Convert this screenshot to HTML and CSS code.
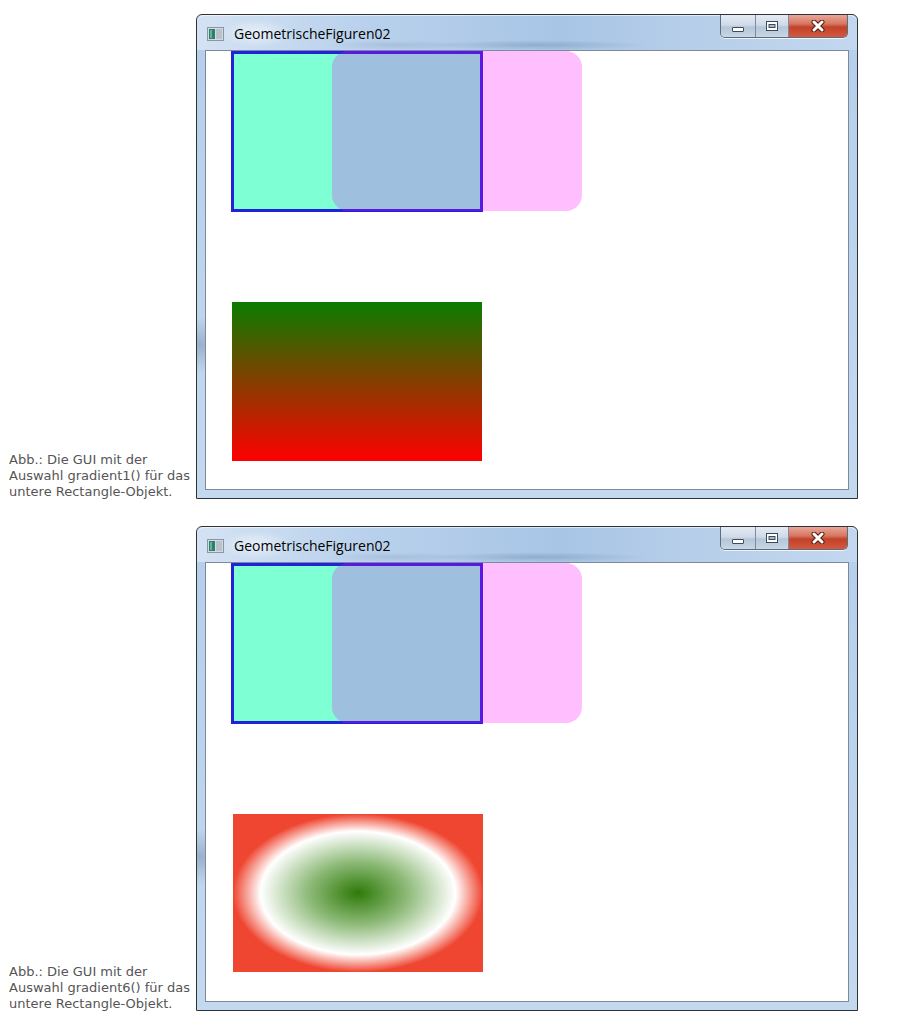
FILE: index.html
```html
<!DOCTYPE html>
<html lang="de">
<head>
<meta charset="utf-8">
<title>GeometrischeFiguren02</title>
<link rel="stylesheet" href="styles.css">
</head>
<body>
<div class="figure">
  <p class="caption">Abb.: Die GUI mit der<br>Auswahl gradient1() für das<br>untere Rectangle-Objekt.</p>
  <div class="window">
    <div class="titlebar">
      <svg class="app-icon" width="17" height="14" viewBox="0 0 17 14"><rect x="0.5" y="0.5" width="16" height="13" fill="#d4dbe2" stroke="#8a96a3"/><rect x="2" y="2" width="6" height="10" fill="#2f7f6c"/><rect x="3" y="3" width="2" height="8" fill="#5fb39a"/><rect x="9" y="2" width="6" height="10" fill="#b8c2cc"/></svg>
      <span class="title">GeometrischeFiguren02</span>
      <div class="controls">
        <div class="btn btn-min"><svg width="14" height="8" viewBox="0 0 14 8"><rect x="1.5" y="3.5" width="11" height="4" rx="0.5" fill="#fff" stroke="#3c4a5c"/></svg></div>
        <div class="btn btn-max"><svg width="14" height="12" viewBox="0 0 14 12"><rect x="1.5" y="1.5" width="11" height="9" fill="#fff" stroke="#3c4a5c"/><rect x="4" y="4.5" width="6" height="3" fill="#a9bacd" stroke="#3c4a5c" stroke-width="1"/></svg></div>
        <div class="btn btn-close"><svg width="16" height="12" viewBox="0 0 16 12"><path d="M4 2 L12 10 M12 2 L4 10" stroke="#5a1a10" stroke-width="5" stroke-linecap="round"/><path d="M4 2 L12 10 M12 2 L4 10" stroke="#fff" stroke-width="3" stroke-linecap="round"/></svg></div>
      </div>
    </div>
    <div class="client">
      <div class="shape aqua"></div>
      <div class="shape pink"></div>
      <div class="shape linear"></div>
    </div>
  </div>
</div>
<div class="figure">
  <p class="caption">Abb.: Die GUI mit der<br>Auswahl gradient6() für das<br>untere Rectangle-Objekt.</p>
  <div class="window">
    <div class="titlebar">
      <svg class="app-icon" width="17" height="14" viewBox="0 0 17 14"><rect x="0.5" y="0.5" width="16" height="13" fill="#d4dbe2" stroke="#8a96a3"/><rect x="2" y="2" width="6" height="10" fill="#2f7f6c"/><rect x="3" y="3" width="2" height="8" fill="#5fb39a"/><rect x="9" y="2" width="6" height="10" fill="#b8c2cc"/></svg>
      <span class="title">GeometrischeFiguren02</span>
      <div class="controls">
        <div class="btn btn-min"><svg width="14" height="8" viewBox="0 0 14 8"><rect x="1.5" y="3.5" width="11" height="4" rx="0.5" fill="#fff" stroke="#3c4a5c"/></svg></div>
        <div class="btn btn-max"><svg width="14" height="12" viewBox="0 0 14 12"><rect x="1.5" y="1.5" width="11" height="9" fill="#fff" stroke="#3c4a5c"/><rect x="4" y="4.5" width="6" height="3" fill="#a9bacd" stroke="#3c4a5c" stroke-width="1"/></svg></div>
        <div class="btn btn-close"><svg width="16" height="12" viewBox="0 0 16 12"><path d="M4 2 L12 10 M12 2 L4 10" stroke="#5a1a10" stroke-width="5" stroke-linecap="round"/><path d="M4 2 L12 10 M12 2 L4 10" stroke="#fff" stroke-width="3" stroke-linecap="round"/></svg></div>
      </div>
    </div>
    <div class="client">
      <div class="shape aqua"></div>
      <div class="shape pink"></div>
      <div class="shape radial"></div>
    </div>
  </div>
</div>
</body>
</html>
```
FILE: styles.css
```css
html, body {
  background: #ffffff;
}
body {
  margin: 8px;
  padding-top: 6px;
  font-family: "DejaVu Sans", Verdana, sans-serif;
}
.figure {
  display: flex;
  align-items: flex-end;
  margin-bottom: 27px;
}
.caption {
  width: 187px;
  margin: 0 0 -1px 0;
  padding: 0 0 0 1px;
  font-size: 13px;
  line-height: 16px;
  color: #555555;
  white-space: nowrap;
}
.window {
  box-sizing: border-box;
  width: 662px;
  height: 485px;
  border: 1px solid #2e3338;
  border-radius: 6px 6px 0 0;
  background:
    radial-gradient(ellipse 60px 40px at 2px 330px, rgba(70, 90, 120, 0.3), rgba(70, 90, 120, 0) 70%),
    linear-gradient(to bottom, #bed5ee 0px, #b7cfea 40px, #c4d9f0 100%);
  display: flex;
  flex-direction: column;
  padding: 0 8px 8px 8px;
  position: relative;
}
.titlebar {
  height: 35px;
  flex: none;
  display: flex;
  align-items: center;
  margin: 0 -8px;
  padding: 0 0 0 10px;
  position: relative;
  border-radius: 6px 6px 0 0;
  background:
    radial-gradient(ellipse 140px 6px at 340px 30px, rgba(60, 80, 110, 0.22), rgba(60, 80, 110, 0) 80%),
    radial-gradient(ellipse 90px 6px at 200px 30px, rgba(60, 80, 110, 0.12), rgba(60, 80, 110, 0) 80%),
    radial-gradient(ellipse 40px 16px at 60px 18px, rgba(255, 255, 255, 0.55), rgba(255, 255, 255, 0) 90%),
    linear-gradient(to right, #d4e3f3 0%, #b9d1ec 25%, #a8c5e6 55%, #b6cee9 75%, #c3d8ef 100%);
  box-shadow: inset 0 1px 0 rgba(255, 255, 255, 0.6);
}
.app-icon {
  flex: none;
  margin-top: 3px;
}
.title {
  margin-left: 10px;
  margin-top: 2px;
  font-family: "Open Sans", "Noto Sans", sans-serif;
  font-size: 14px;
  color: #000000;
}
.controls {
  position: absolute;
  top: 0;
  right: 9px;
  display: flex;
  height: 22px;
  border: 1px solid #5d6c7e;
  border-top: none;
  border-radius: 0 0 5px 5px;
  overflow: hidden;
  box-shadow: 0 1px 0 rgba(255, 255, 255, 0.7);
}
.btn {
  display: flex;
  align-items: center;
  justify-content: center;
}
.btn-min, .btn-max {
  background: linear-gradient(to bottom, #e4ebf3 0%, #cfdbe8 45%, #b5c6d9 55%, #c8d6e5 100%);
  border-right: 1px solid #7d8b9c;
}
.btn-min {
  width: 34px;
}
.btn-min svg {
  margin-top: 4px;
}
.btn-max {
  width: 32px;
}
.btn-close {
  width: 58px;
  background: linear-gradient(to bottom, #e8a799 0%, #d8765f 40%, #c4412a 55%, #d25a3d 100%);
}
.client {
  flex: 1;
  position: relative;
  background: #ffffff;
  border: 1px solid #7b8a9c;
  overflow: hidden;
}
.shape {
  position: absolute;
  box-sizing: border-box;
}
.aqua {
  left: 25px;
  top: 0;
  width: 252px;
  height: 161px;
  background: #7fffd4;
  border: 3px solid #2222d6;
}
.pink {
  left: 126px;
  top: 0;
  width: 250px;
  height: 160px;
  border-radius: 16px;
  background: rgba(255, 0, 255, 0.25);
}
.linear {
  left: 26px;
  top: 251px;
  width: 250px;
  height: 159px;
  background: linear-gradient(to bottom, #0a7c00 0%, #ff0000 100%);
}
.radial {
  left: 27px;
  top: 251px;
  width: 250px;
  height: 158px;
  background: radial-gradient(ellipse closest-side at 50% 50%, #2e7a08 0%, #8fbb7a 40%, #ffffff 78%, #ef4631 100%);
}
```
